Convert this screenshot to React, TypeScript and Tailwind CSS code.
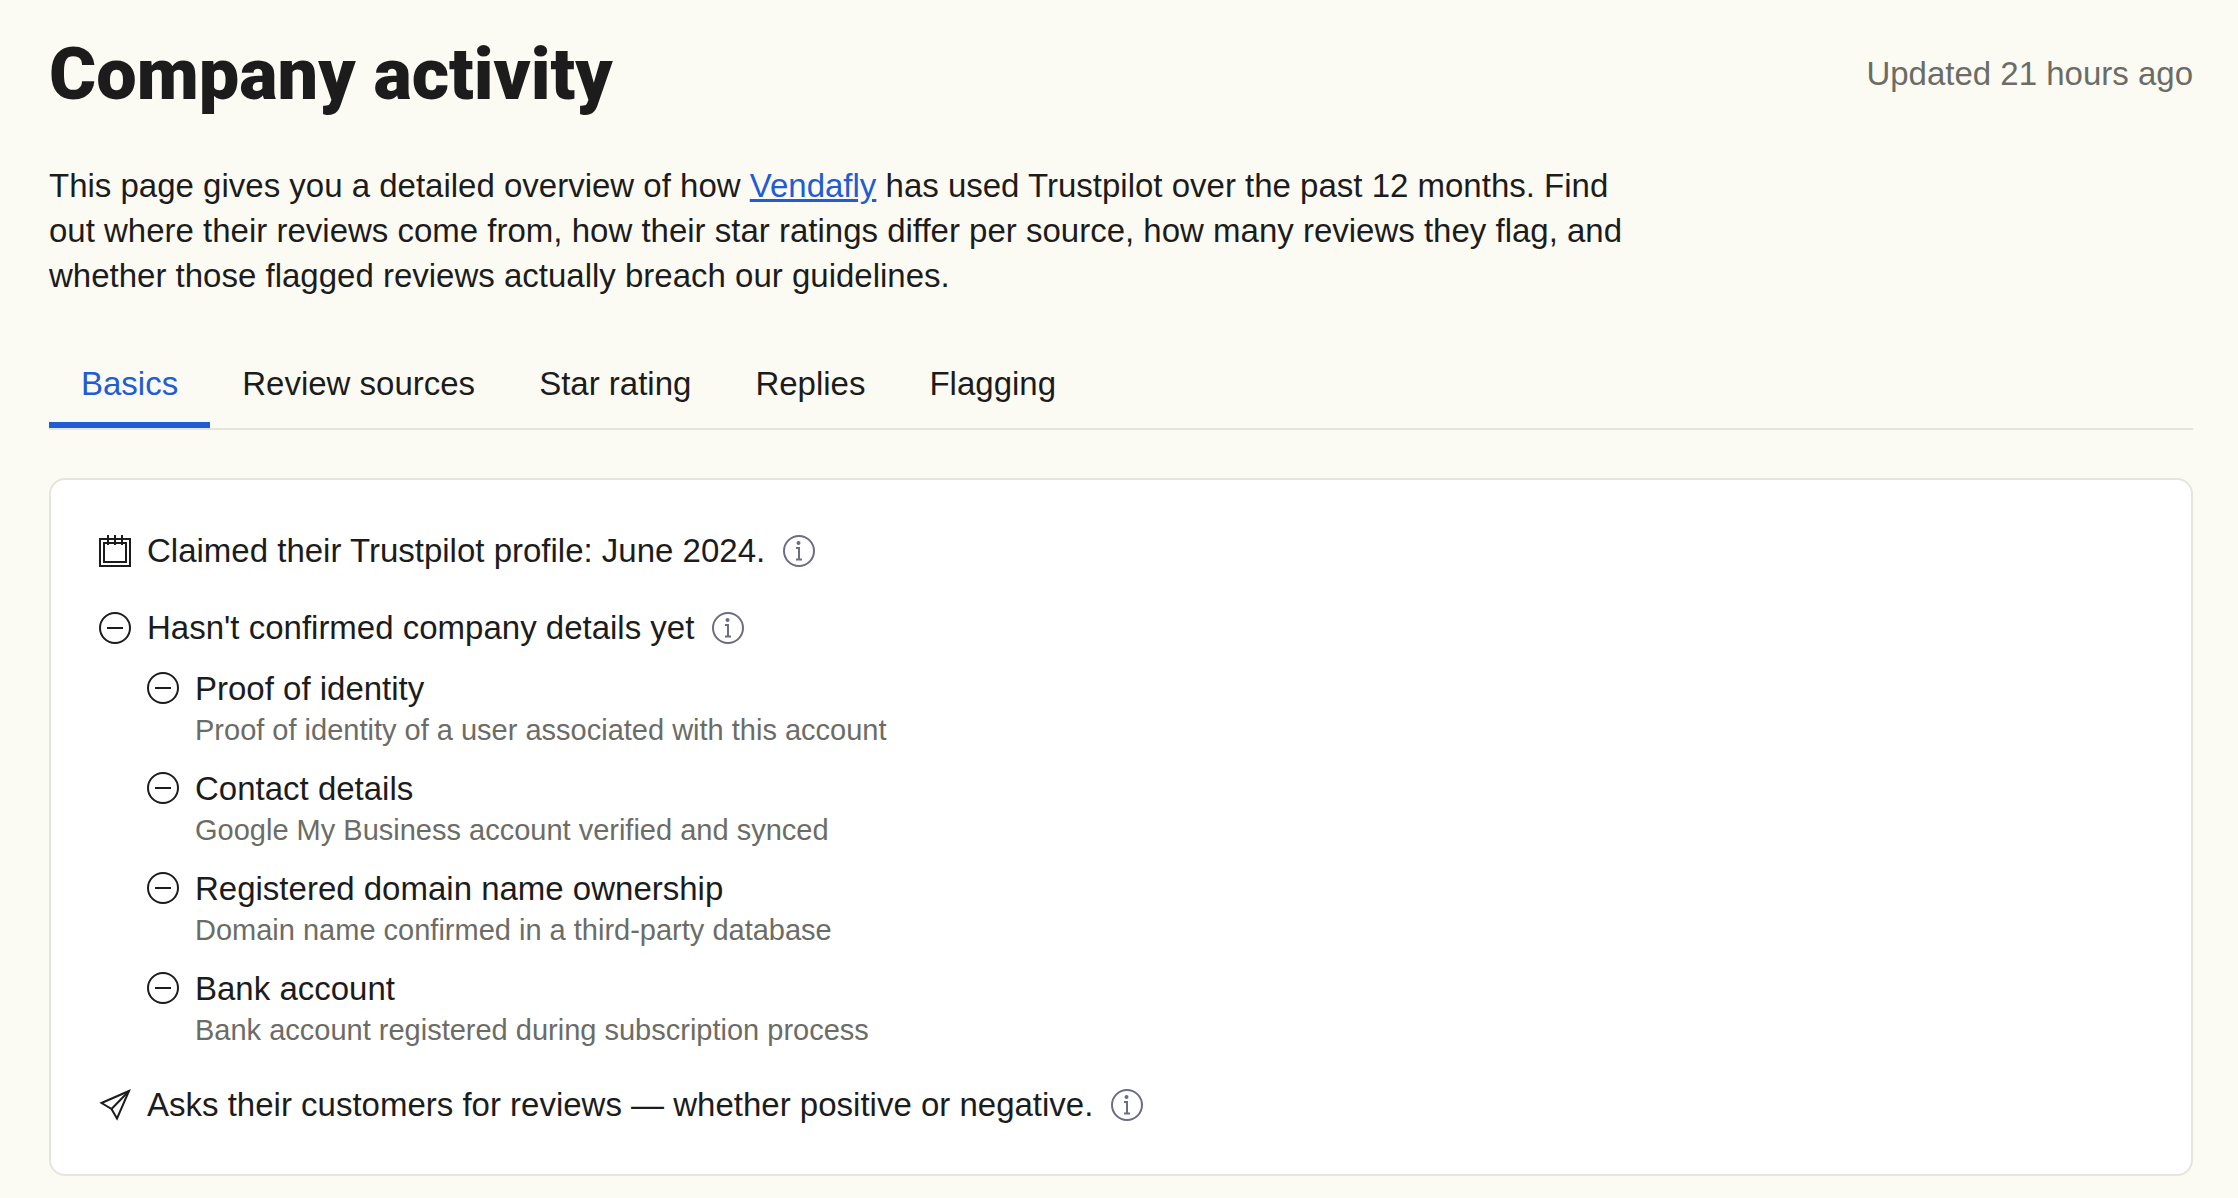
import { useState, type ReactNode } from "react";

const tabs = ["Basics", "Review sources", "Star rating", "Replies", "Flagging"];

const details = [
  {
    title: "Proof of identity",
    description: "Proof of identity of a user associated with this account",
  },
  {
    title: "Contact details",
    description: "Google My Business account verified and synced",
  },
  {
    title: "Registered domain name ownership",
    description: "Domain name confirmed in a third-party database",
  },
  {
    title: "Bank account",
    description: "Bank account registered during subscription process",
  },
];

function CalendarIcon() {
  return (
    <svg className="size-8 shrink-0" viewBox="0 0 32 32" fill="none" stroke="currentColor" strokeWidth={2} aria-hidden="true">
      <path d="M1 4h30v27H1z" />
      <path d="M5 8h22v19H5z" />
      <path d="M9 0v10M16 0v10M23 0v10" />
    </svg>
  );
}

function MinusCircleIcon() {
  return (
    <svg className="size-8 shrink-0" viewBox="0 0 32 32" fill="none" stroke="currentColor" strokeWidth={2} aria-hidden="true">
      <circle cx="16" cy="16" r="15" />
      <path d="M8 16h16" />
    </svg>
  );
}

function SendIcon() {
  return (
    <svg className="size-8 shrink-0" viewBox="0 0 32 32" fill="none" stroke="currentColor" strokeWidth={2} aria-hidden="true">
      <path d="M30 2 2.5 14l10 6L18 29.5z" />
      <path d="M30 2 12.5 20" />
    </svg>
  );
}

function InfoButton({ label }: { label: string }) {
  return (
    <button type="button" aria-label={label} className="ml-[18px] shrink-0 cursor-pointer text-[#6c6c85]">
      <svg className="size-8" viewBox="0 0 32 32" fill="none" stroke="currentColor" strokeWidth={2} aria-hidden="true">
        <circle cx="16" cy="16" r="15" />
        <circle cx="15.5" cy="8" r="2" fill="currentColor" stroke="none" />
        <path d="M13 13h3v11M13 24.5h6" />
      </svg>
    </button>
  );
}

function Row({ icon, info, children }: { icon: ReactNode; info: string; children: ReactNode }) {
  return (
    <div className="flex items-center">
      {icon}
      <p className="ml-4 text-[33px] leading-[45px]">{children}</p>
      <InfoButton label={info} />
    </div>
  );
}

export default function App() {
  const [active, setActive] = useState("Basics");

  return (
    <main className="min-h-screen bg-[#fcfbf3] pt-[39px] pr-[45px] pb-[22px] pl-[49px] font-['Liberation_Sans',Arial,sans-serif] text-[#1c1c1c]">
      {/* Header */}
      <header className="flex items-start justify-between">
        <h1 className="font-['Roboto',sans-serif] text-[72px] leading-[72px] font-black">Company activity</h1>
        <p className="pt-3 text-[33px] leading-[45px] text-[#6c6c66]">Updated 21 hours ago</p>
      </header>

      <p className="mt-[52px] max-w-[1600px] text-[33px] leading-[45px]">
        This page gives you a detailed overview of how{" "}
        <a href="#" className="text-[#205cd4] underline">
          Vendafly
        </a>{" "}
        has used Trustpilot over the past 12 months. Find out where their reviews come from, how their star
        ratings differ per source, how many reviews they flag, and whether those flagged reviews actually
        breach our guidelines.
      </p>

      {/* Tabs */}
      <div role="tablist" className="mt-[47px] flex border-b-2 border-[#e5e5dd]">
        {tabs.map((tab) => (
          <button
            key={tab}
            type="button"
            role="tab"
            aria-selected={active === tab}
            onClick={() => setActive(tab)}
            className={`cursor-pointer border-b-6 px-8 pt-4 pb-4 text-[33px] leading-[45px] ${
              active === tab ? "border-[#205cd4] text-[#205cd4]" : "border-transparent"
            }`}
          >
            {tab}
          </button>
        ))}
      </div>

      {/* Basics */}
      <section className="mt-12 rounded-2xl border-2 border-[#e5e5dd] bg-white px-12 pt-12 pb-[47px]">
        <Row icon={<CalendarIcon />} info="About claimed profiles">
          Claimed their Trustpilot profile: June 2024.
        </Row>

        <div className="mt-8">
          <Row icon={<MinusCircleIcon />} info="About company details">
            Hasn't confirmed company details yet
          </Row>
          <ul className="mt-4 ml-12 space-y-4">
            {details.map((item) => (
              <li key={item.title} className="flex items-start gap-4">
                <span className="pt-1.5">
                  <MinusCircleIcon />
                </span>
                <div>
                  <p className="text-[33px] leading-[45px]">{item.title}</p>
                  <p className="text-[29px] leading-[39px] text-[#6c6c66]">{item.description}</p>
                </div>
              </li>
            ))}
          </ul>
        </div>

        <div className="mt-8">
          <Row icon={<SendIcon />} info="About asking for reviews">
            Asks their customers for reviews — whether positive or negative.
          </Row>
        </div>
      </section>
    </main>
  );
}
